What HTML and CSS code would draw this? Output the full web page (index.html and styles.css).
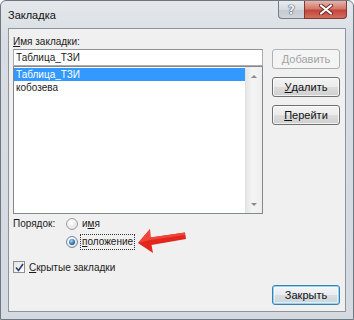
FILE: index.html
```html
<!DOCTYPE html>
<html lang="ru">
<head>
<meta charset="utf-8">
<title>Закладка</title>
<link rel="stylesheet" href="styles.css">
</head>
<body>
<div class="window">
  <div class="titlebar">
    <span class="title">Закладка</span>
    <div class="caption-buttons">
      <div class="cap-btn help"><span>?</span></div>
      <div class="cap-btn close">
        <svg width="14" height="11" viewBox="0 0 14 11">
          <path d="M2 1.5 L12 9.5 M12 1.5 L2 9.5" stroke="#6a2a25" stroke-width="4" stroke-linecap="round"/>
          <path d="M2 1.5 L12 9.5 M12 1.5 L2 9.5" stroke="#ffffff" stroke-width="2.2" stroke-linecap="round"/>
        </svg>
      </div>
    </div>
  </div>
  <div class="client">
    <div class="top">
      <div class="left">
        <div class="field-label"><u>И</u>мя закладки:</div>
        <div class="input">Таблица_ТЗИ</div>
        <div class="listbox">
          <div class="items">
            <div class="item selected">Таблица_ТЗИ</div>
            <div class="item">кобозева</div>
          </div>
          <div class="scrollbar">
            <span class="arrow up"></span>
            <span class="arrow down"></span>
          </div>
        </div>
      </div>
      <div class="buttons">
        <div class="btn disabled">Добавить</div>
        <div class="btn"><u>У</u>далить</div>
        <div class="btn"><u>П</u>ерейти</div>
      </div>
    </div>
    <div class="order">
      <div class="order-label">Порядок:</div>
      <div class="radios">
        <div class="radio-row"><span class="radio"></span><span class="radio-text">и<u>м</u>я</span></div>
        <div class="radio-row"><span class="radio checked"></span><span class="radio-text focused"><u>п</u>оложение</span></div>
      </div>
    </div>
    <div class="check-row">
      <span class="checkbox">
        <svg width="9" height="9" viewBox="0 0 9 9"><path d="M1 4.5 L3.5 7.5 L8 1" fill="none" stroke="#2a3f6e" stroke-width="1.6"/></svg>
      </span>
      <span class="check-text"><u>С</u>крытые закладки</span>
    </div>
    <div class="footer">
      <div class="btn default">Закрыть</div>
    </div>
  </div>
  <svg class="annot-arrow" width="54" height="30" viewBox="0 0 54 30">
    <polygon points="4,17 16,3 16.5,11.5 51,6.5 52,13 17.5,19 19,27" fill="#e3261c"/>
    <polygon points="4,17 16,3 16.5,11.5 51,6.5 51,9 16,14" fill="#f0453a"/>
  </svg>
</div>
</body>
</html>
```

FILE: styles.css
```css
html, body {
  margin: 0;
  padding: 0;
  background: #ffffff;
}
body {
  font-family: "Liberation Sans", Arial, sans-serif;
  font-size: 10px;
  color: #1b1b1b;
}
u { text-decoration: underline; text-underline-offset: 1px; }

.window {
  position: relative;
  width: 354px;
  height: 320px;
  box-sizing: border-box;
  border: 1px solid #6f7880;
  border-radius: 6px 6px 0 0;
  background: linear-gradient(#e4e8ec, #d7dde3 40px, #d4dadf);
  display: flex;
  flex-direction: column;
  padding: 0 7px 7px 7px;
}

.titlebar {
  height: 27px;
  display: flex;
  align-items: flex-start;
  justify-content: space-between;
}
.title {
  font-size: 11px;
  color: #111;
  margin-top: 8px;
  margin-left: 0;
}
.caption-buttons {
  display: flex;
  margin-right: -1px;
  margin-top: 0;
}
.cap-btn {
  height: 18px;
  box-sizing: border-box;
  border: 1px solid #767d86;
  border-top: none;
  display: flex;
  align-items: center;
  justify-content: center;
}
.help {
  width: 26px;
  border-radius: 0 0 0 4px;
  background: linear-gradient(#e9ecef, #d4d9de 50%, #c3c9cf 51%, #cfd5da);
  border-right: none;
}
.help span {
  font-family: "DejaVu Sans", sans-serif;
  font-weight: bold;
  font-size: 12px;
  color: #eef1f4;
  text-shadow: 0 0 1px #4b5561, 0 0 1px #4b5561, 0 0 1px #4b5561;
}
.close {
  width: 43px;
  border-radius: 0 0 4px 0;
  background: linear-gradient(#e7b4ab, #d3786c 45%, #c4463a 55%, #d36e5f);
  border-color: #7c3a33;
}

.client {
  flex: 1;
  background: #f0f0f0;
  border: 1px solid #8c949c;
  padding: 6px 5px 0 4px;
  display: flex;
  flex-direction: column;
}

.top {
  display: flex;
  gap: 9px;
}
.left {
  width: 250px;
  display: flex;
  flex-direction: column;
}
.field-label {
  height: 14px;
  line-height: 14px;
}
.input {
  height: 17px;
  box-sizing: border-box;
  border: 1px solid #abadb3;
  border-top-color: #8e9299;
  background: #fff;
  padding: 0 2px;
  line-height: 15px;
}
.listbox {
  height: 148px;
  box-sizing: border-box;
  border: 1px solid #828790;
  background: #fff;
  display: flex;
}
.items {
  flex: 1;
  padding-top: 1px;
}
.item {
  height: 13px;
  line-height: 13px;
  padding: 0 2px;
}
.item.selected {
  background: #3399ff;
  color: #fff;
}
.scrollbar {
  width: 16px;
  background: linear-gradient(90deg, #e6e6e6, #f4f4f4 40%, #eeeeee);
  border-left: 1px solid #e1e1e1;
  display: flex;
  flex-direction: column;
  justify-content: space-between;
  align-items: center;
  padding: 8px 0 7px;
}
.arrow {
  width: 0;
  height: 0;
  border-left: 3px solid transparent;
  border-right: 3px solid transparent;
}
.arrow.up { border-bottom: 3px solid #8a8a8a; }
.arrow.down { border-top: 3px solid #8a8a8a; }

.buttons {
  width: 68px;
  padding-top: 14px;
  display: flex;
  flex-direction: column;
  gap: 8px;
}
.btn {
  height: 20px;
  box-sizing: border-box;
  border: 1px solid #707070;
  border-radius: 3px;
  background: linear-gradient(#f3f3f3, #ebebeb 50%, #dddddd 51%, #cfcfcf);
  display: flex;
  align-items: center;
  justify-content: center;
  color: #111;
  font-size: 11px;
  box-shadow: inset 0 0 0 1px rgba(255,255,255,0.7);
}
.btn.disabled {
  border-color: #adb2b5;
  background: #f4f4f4;
  color: #a3a3a3;
  box-shadow: none;
}
.btn.default {
  width: 68px;
  border-color: #3c7fb1;
  box-shadow: inset 0 0 0 1px #8fd6f5, inset 0 0 0 2px rgba(255,255,255,0.5);
  background: linear-gradient(#f3f5f7, #e9ecee 50%, #d9dde1 51%, #ced4d8);
}

.order {
  margin-top: 1px;
  display: flex;
}
.order-label {
  width: 53px;
  height: 18px;
  line-height: 18px;
}
.radios {
  display: flex;
  flex-direction: column;
}
.radio-row {
  height: 18px;
  display: flex;
  align-items: center;
  gap: 2px;
}
.radio {
  width: 12px;
  height: 12px;
  box-sizing: border-box;
  border: 1px solid #a0a0a0;
  border-radius: 50%;
  background: radial-gradient(circle at 40% 35%, #ffffff, #e4e4e4 70%, #d6d6d6);
  position: relative;
}
.radio.checked {
  border-color: #6f8aa8;
}
.radio.checked::after {
  content: "";
  position: absolute;
  left: 2px;
  top: 2px;
  width: 6px;
  height: 6px;
  border-radius: 50%;
  background: radial-gradient(circle at 40% 35%, #a9d8f5, #2d6aa3 60%, #1c4c80);
}
.radio-text {
  padding: 0 1px;
  line-height: 14px;
  border: 1px dotted transparent;
}
.radio-text.focused {
  border-color: #333;
}

.check-row {
  margin-top: 8px;
  height: 16px;
  display: flex;
  align-items: center;
  gap: 4px;
}
.checkbox {
  width: 12px;
  height: 12px;
  box-sizing: border-box;
  border: 1px solid #8f8f8f;
  background: linear-gradient(135deg, #e3e3e3, #ffffff);
  display: flex;
  align-items: center;
  justify-content: center;
}

.footer {
  margin-top: 10px;
  display: flex;
  justify-content: flex-end;
}

.annot-arrow {
  position: absolute;
  left: 133px;
  top: 225px;
}
```
